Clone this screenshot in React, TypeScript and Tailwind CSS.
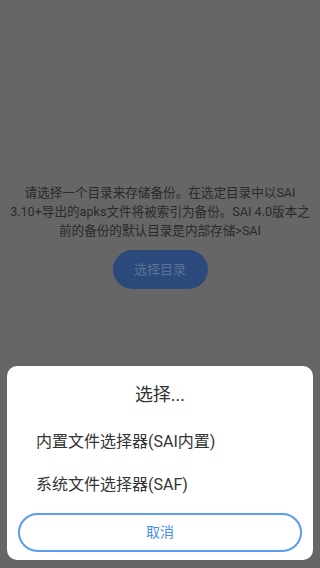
import React from 'react';

const font = { fontFamily: '"Roboto", "Noto Sans CJK SC", sans-serif' };

export default function App() {
  return (
    <div className="relative w-[320px] h-[568px] overflow-hidden bg-[#666666]" style={font}>
      {/* page under the scrim */}
      <div className="flex flex-col items-center pt-[183px]">
        <p className="w-[304px] text-center text-[12.6px] leading-[19px] text-[#2a2a2a]">
          请选择一个目录来存储备份。在选定目录中以SAI 3.10+导出的apks文件将被索引为备份。SAI 4.0版本之前的备份的默认目录是内部存储&gt;SAI
        </p>
        <button className="mt-[10px] h-[39px] w-[95px] rounded-full bg-[#2b4a7b] text-[13px] text-[#5d7396]">
          选择目录
        </button>
      </div>

      {/* bottom sheet */}
      <div className="absolute left-[7px] right-[7px] bottom-[8px] h-[194px] rounded-[10px] bg-white flex flex-col">
        <div className="pt-[17px] text-center text-[18px] leading-[24px] text-[#333333]">选择...</div>
        <div className="mt-[13px] flex flex-col">
          <div className="h-[43px] flex items-center pl-[29px] text-[16px] text-[#333333]">内置文件选择器(SAI内置)</div>
          <div className="h-[43px] flex items-center pl-[29px] text-[16px] text-[#333333]">系统文件选择器(SAF)</div>
        </div>
        <div className="mt-auto mb-[8px] mx-[11px]">
          <button className="w-full h-[39px] rounded-full border-2 border-[#5b9bf5] text-[14px] text-[#4a8cf0]">
            取消
          </button>
        </div>
      </div>
    </div>
  );
}
